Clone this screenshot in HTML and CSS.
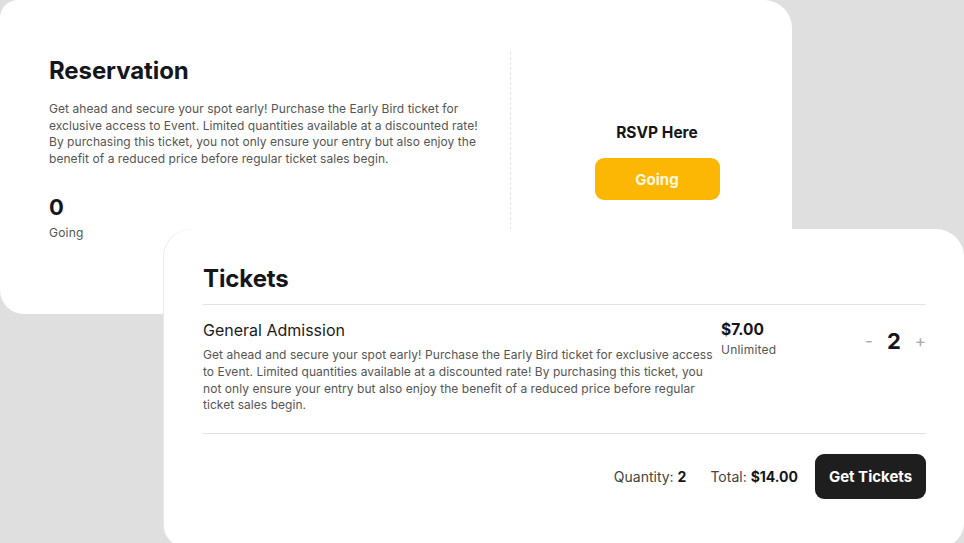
FILE: index.html
```html
<!DOCTYPE html>
<html lang="en">
<head>
<meta charset="utf-8">
<title>Reservation</title>
<link rel="stylesheet" href="styles.css">
</head>
<body>
<div class="stage">
  <section class="card card-reservation">
    <div class="res-main">
      <h1 class="title">Reservation</h1>
      <p class="desc">Get ahead and secure your spot early! Purchase the Early Bird ticket for exclusive access to Event. Limited quantities available at a discounted rate! By purchasing this ticket, you not only ensure your entry but also enjoy the benefit of a reduced price before regular ticket sales begin.</p>
      <div class="count">0</div>
      <div class="count-label">Going</div>
    </div>
    <div class="res-side">
      <div class="rsvp-title">RSVP Here</div>
      <button class="btn-going">Going</button>
    </div>
  </section>

  <section class="card card-tickets">
    <h2 class="title tickets-title">Tickets</h2>
    <div class="ticket-row">
      <div class="ticket-info">
        <div class="ticket-name">General Admission</div>
        <p class="ticket-desc">Get ahead and secure your spot early! Purchase the Early Bird ticket for exclusive access to Event. Limited quantities available at a discounted rate! By purchasing this ticket, you not only ensure your entry but also enjoy the benefit of a reduced price before regular ticket sales begin.</p>
      </div>
      <div class="ticket-price">
        <div class="price">$7.00</div>
        <div class="price-note">Unlimited</div>
      </div>
      <div class="qty">
        <span class="qty-btn">-</span>
        <span class="qty-val">2</span>
        <span class="qty-btn">+</span>
      </div>
    </div>
    <div class="ticket-footer">
      <span class="sum">Quantity: <b>2</b></span>
      <span class="sum">Total: <b>$14.00</b></span>
      <button class="btn-get">Get Tickets</button>
    </div>
  </section>
</div>
</body>
</html>
```

FILE: styles.css
```css
* { box-sizing: border-box; }
html, body { margin: 0; padding: 0; }
body {
  font-family: Inter, "Noto Sans", "Liberation Sans", sans-serif;
  color: #15161b;
  background: #dfdfdf;
}
.stage {
  position: relative;
  width: 964px;
  height: 543px;
  overflow: hidden;
  background: #dfdfdf;
}
.card {
  position: absolute;
  background: #ffffff;
}
.card-reservation {
  left: 0;
  top: 0;
  width: 792px;
  height: 314px;
  border-radius: 18px 28px 24px 24px;
  display: grid;
  grid-template-columns: 511px 1fr;
  padding: 52px 0 0 0;
}
.res-main {
  padding: 4px 22px 0 49px;
  height: 178px;
  border-right: 1px dashed #e6e6e6;
}
.title {
  margin: 0;
  font-size: 24px;
  line-height: 30px;
  font-weight: 700;
  letter-spacing: -0.1px;
}
.desc {
  margin: 15px 0 0;
  font-size: 12px;
  line-height: 16.6px;
  letter-spacing: 0.05px;
  color: #555;
}
.count {
  margin-top: 27px;
  font-size: 22px;
  font-weight: 700;
  line-height: 26px;
}
.count-label {
  margin-top: 5px;
  font-size: 12px;
  line-height: 16px;
  letter-spacing: 0.2px;
  color: #555;
}
.res-side {
  display: flex;
  flex-direction: column;
  align-items: center;
  padding: 71px 0 0 11px;
}
.rsvp-title {
  font-size: 15.5px;
  font-weight: 700;
  line-height: 20px;
}
.btn-going {
  margin-top: 15px;
  width: 125px;
  height: 42px;
  border: 0;
  border-radius: 9px;
  background: #fbb703;
  color: #fff7e0;
  font-family: inherit;
  font-size: 15px;
  font-weight: 700;
}
.card-tickets {
  left: 164px;
  top: 229px;
  width: 800px;
  height: 318px;
  border-radius: 28px 28px 24px 22px;
  box-shadow: -1px 0 0 #eaeaea;
  padding: 35px 38px 0 39px;
}
.tickets-title {
  padding-bottom: 10px;
  border-bottom: 1px solid #e4e4e4;
}
.ticket-row {
  display: grid;
  grid-template-columns: 1fr 150px auto;
  padding: 15px 0 19px;
  border-bottom: 1px solid #e4e4e4;
}
.ticket-name {
  font-size: 16px;
  line-height: 20px;
  color: #1c1c1c;
}
.ticket-desc {
  margin: 7px 0 0;
  font-size: 12px;
  line-height: 16.8px;
  letter-spacing: 0.05px;
  color: #555;
  max-width: 512px;
}
.ticket-price { padding-left: 6px; }
.price {
  font-size: 15.5px;
  font-weight: 700;
  line-height: 20px;
}
.price-note {
  margin-top: 2px;
  font-size: 12px;
  line-height: 16px;
  letter-spacing: 0.2px;
  color: #555;
}
.qty {
  display: flex;
  align-items: center;
  gap: 14px;
  height: 26px;
  margin-top: 8px;
}
.qty-btn {
  font-size: 17px;
  color: #a9a9a9;
  line-height: 20px;
}
.qty-val {
  font-size: 22px;
  font-weight: 700;
  line-height: 26px;
}
.ticket-footer {
  display: flex;
  justify-content: flex-end;
  align-items: center;
  gap: 24px;
  padding-top: 20px;
}
.sum {
  font-size: 14px;
  color: #444;
}
.sum b { color: #15161b; font-weight: 700; }
.btn-get {
  margin-left: -7px;
  width: 111px;
  height: 45px;
  border: 0;
  border-radius: 9px;
  background: #1e1e1e;
  color: #ffffff;
  font-family: inherit;
  font-size: 15px;
  font-weight: 700;
}
```
